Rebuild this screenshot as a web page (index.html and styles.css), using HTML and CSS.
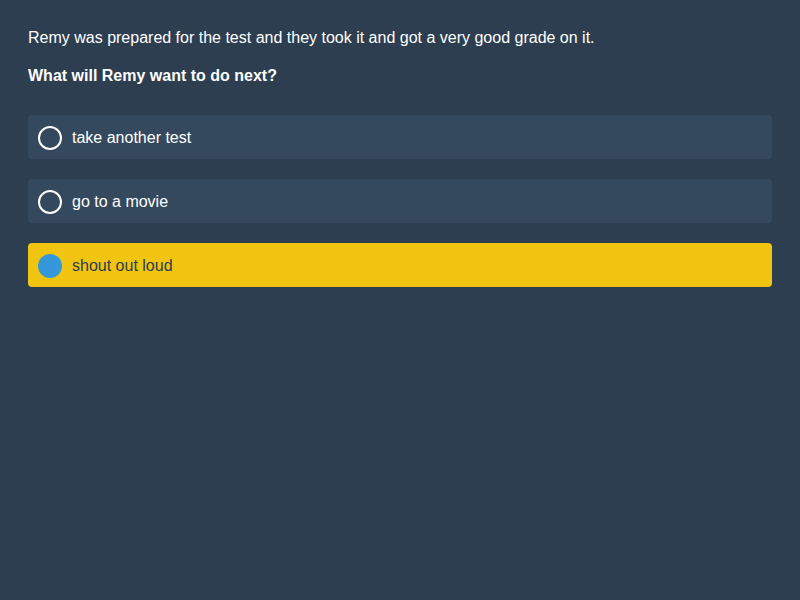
FILE: index.html
```html
<!DOCTYPE html>
<html>
<head>
<meta charset="utf-8">
<link rel="stylesheet" href="styles.css">
</head>
<body>
<div class="page">
  <p class="context">Remy was prepared for the test and they took it and got a very good grade on it.</p>
  <p class="question">What will Remy want to do next?</p>
  <div class="options">
    <div class="option"><span class="radio"></span><span class="label">take another test</span></div>
    <div class="option"><span class="radio"></span><span class="label">go to a movie</span></div>
    <div class="option selected"><span class="radio"></span><span class="label">shout out loud</span></div>
  </div>
</div>
</body>
</html>
```
FILE: styles.css
```css
html, body {
  margin: 0;
  padding: 0;
  background: #2c3e50;
  height: 100%;
}
body {
  font-family: "Liberation Sans", Arial, sans-serif;
  font-size: 16px;
  color: #ffffff;
}
.page {
  padding: 28px 28px;
}
.context {
  margin: 0 0 18px 0;
  line-height: 20px;
}
.question {
  margin: 0 0 29px 0;
  font-weight: bold;
  line-height: 20px;
}
.options {
  display: flex;
  flex-direction: column;
  gap: 20px;
}
.option {
  display: flex;
  align-items: center;
  height: 44px;
  box-sizing: border-box;
  padding: 1px 10px 0 10px;
  background: #34495e;
  border-radius: 4px;
}
.radio {
  width: 24px;
  height: 24px;
  box-sizing: border-box;
  border: 2px solid #ffffff;
  border-radius: 50%;
  margin-right: 10px;
  flex: none;
}
.option.selected {
  background: #f1c40f;
  color: #2c3e50;
}
.option.selected .radio {
  border: none;
  background: #3498db;
}
```
